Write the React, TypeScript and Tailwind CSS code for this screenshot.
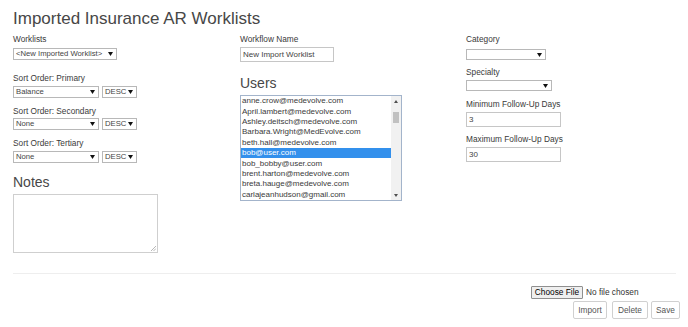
import React from 'react';

const users = [
  'anne.crow@medevolve.com',
  'April.lambert@medevolve.com',
  'Ashley.deitsch@medevolve.com',
  'Barbara.Wright@MedEvolve.com',
  'beth.hall@medevolve.com',
  'bob@user.com',
  'bob_bobby@user.com',
  'brent.harton@medevolve.com',
  'breta.hauge@medevolve.com',
  'carlajeanhudson@gmail.com',
];

const Arrow = ({ color = '#111' }: { color?: string }) => (
  <svg width="5" height="4" viewBox="0 0 5 4" className="shrink-0">
    <polygon points="0,0 5,0 2.5,4" fill={color} />
  </svg>
);

const Label = ({ text, className = '' }: { text: string; className?: string }) => (
  <div className={`text-[8.3px] leading-[10px] text-[#3a3a3a] ${className}`}>{text}</div>
);

const Select = ({ text = '', className = '' }: { text?: string; className?: string }) => (
  <div
    className={`flex items-center justify-between border border-[#b8b8b8] bg-white pl-[2px] pr-[3px] text-[7.7px] leading-[10px] text-[#444] ${className}`}
  >
    <span className="whitespace-nowrap">{text}</span>
    <Arrow />
  </div>
);

const Input = ({ value, className = '' }: { value: string; className?: string }) => (
  <div
    className={`flex items-center border border-[#c6c6c6] bg-white px-[2px] text-[8px] text-[#444] ${className}`}
  >
    {value}
  </div>
);

export default function App() {
  return (
    <div className="w-[688px] h-[327px] overflow-hidden bg-white pl-[13px] font-['Liberation_Sans',Arial,sans-serif] text-[#333]">
      {/* Title */}
      <h1 className="mt-[9px] text-[17px] leading-[20px] text-[#474747] whitespace-nowrap">
        Imported Insurance AR Worklists
      </h1>

      <div className="flex items-start">
        {/* Column 1 */}
        <div className="w-[227px] flex flex-col">
          <Label text="Worklists" className="mt-[5px]" />
          <Select text="<New Imported Worklist>" className="mt-[4px] h-[12px] w-[104px]" />

          <Label text="Sort Order: Primary" className="mt-[13px]" />
          <div className="mt-[3px] flex gap-[3px]">
            <Select text="Balance" className="h-[12px] w-[86px]" />
            <Select text="DESC" className="h-[12px] w-[35px]" />
          </div>

          <Label text="Sort Order: Secondary" className="mt-[8px]" />
          <div className="mt-[2px] flex gap-[3px]">
            <Select text="None" className="h-[12px] w-[86px]" />
            <Select text="DESC" className="h-[12px] w-[35px]" />
          </div>

          <Label text="Sort Order: Tertiary" className="mt-[8px]" />
          <div className="mt-[3px] flex gap-[3px]">
            <Select text="None" className="h-[12px] w-[86px]" />
            <Select text="DESC" className="h-[12px] w-[35px]" />
          </div>

          <div className="mt-[11px] text-[14px] leading-[16px] text-[#474747]">Notes</div>
          <div className="relative mt-[4px] h-[59px] w-[145px] border border-[#cfcfcf] bg-white">
            <svg width="6" height="6" viewBox="0 0 6 6" className="absolute bottom-[1px] right-[1px]">
              <line x1="1" y1="6" x2="6" y2="1" stroke="#999" strokeWidth="0.7" />
              <line x1="3.5" y1="6" x2="6" y2="3.5" stroke="#999" strokeWidth="0.7" />
            </svg>
          </div>
        </div>

        {/* Column 2 */}
        <div className="w-[226px] flex flex-col">
          <Label text="Workflow Name" className="mt-[5px]" />
          <Input value="New Import Worklist" className="mt-[3px] h-[15px] w-[94px]" />

          <div className="mt-[13px] text-[14px] leading-[16px] text-[#474747]">Users</div>
          <div className="mt-[4px] flex h-[106px] w-[162px] border border-[#a3b4cb] bg-white">
            <div className="flex-1 flex flex-col">
              {users.map((u) => (
                <div
                  key={u}
                  className={`flex h-[10.4px] items-center pl-[1px] text-[8px] whitespace-nowrap ${
                    u === 'bob@user.com' ? 'bg-[#3390ec] text-white' : 'text-[#3a3a3a]'
                  }`}
                >
                  {u}
                </div>
              ))}
            </div>
            <div className="flex w-[10px] flex-col items-center bg-[#f1f1f1]">
              <div className="flex h-[10px] items-center justify-center">
                <svg width="4" height="3" viewBox="0 0 4 3">
                  <polygon points="0,3 4,3 2,0" fill="#505050" />
                </svg>
              </div>
              <div className="mt-[6px] h-[11px] w-[6px] bg-[#c1c1c1]" />
              <div className="flex-1" />
              <div className="flex h-[10px] items-center justify-center">
                <svg width="4" height="3" viewBox="0 0 4 3">
                  <polygon points="0,0 4,0 2,3" fill="#505050" />
                </svg>
              </div>
            </div>
          </div>
        </div>

        {/* Column 3 */}
        <div className="flex-1 flex flex-col">
          <Label text="Category" className="mt-[5px]" />
          <Select className="mt-[5px] h-[11px] w-[80px]" />

          <Label text="Specialty" className="mt-[7px]" />
          <Select className="mt-[3px] h-[11px] w-[86px]" />

          <Label text="Minimum Follow-Up Days" className="mt-[8px]" />
          <Input value="3" className="mt-[3px] h-[15px] w-[95px]" />

          <Label text="Maximum Follow-Up Days" className="mt-[7px]" />
          <Input value="30" className="mt-[3px] h-[15px] w-[95px]" />
        </div>
      </div>

      {/* Footer */}
      <div className="mt-[20px] mr-[12px] h-[1px] bg-[#eeeeee]" />

      <div className="flex justify-end pr-[8px]">
        <div className="flex w-[149px] flex-col">
          <div className="mt-[12px] flex items-center gap-[3px]">
            <div className="flex h-[13px] w-[52px] items-center justify-center rounded-[1px] border border-[#8f8f8f] bg-[#efefef] text-[8.3px] text-black">
              Choose File
            </div>
            <span className="text-[8.3px] text-[#333]">No file chosen</span>
          </div>
          <div className="mt-[2px] flex justify-end">
            <button className="h-[18px] w-[34px] rounded-[2px] border border-[#d0d0d0] bg-white text-[8.3px] text-[#555]">
              Import
            </button>
            <button className="ml-[5px] h-[18px] w-[36px] rounded-[2px] border border-[#d0d0d0] bg-white text-[8.3px] text-[#555]">
              Delete
            </button>
            <button className="ml-[3px] h-[18px] w-[29px] rounded-[2px] border border-[#d0d0d0] bg-white text-[8.3px] text-[#555]">
              Save
            </button>
          </div>
        </div>
      </div>
    </div>
  );
}
